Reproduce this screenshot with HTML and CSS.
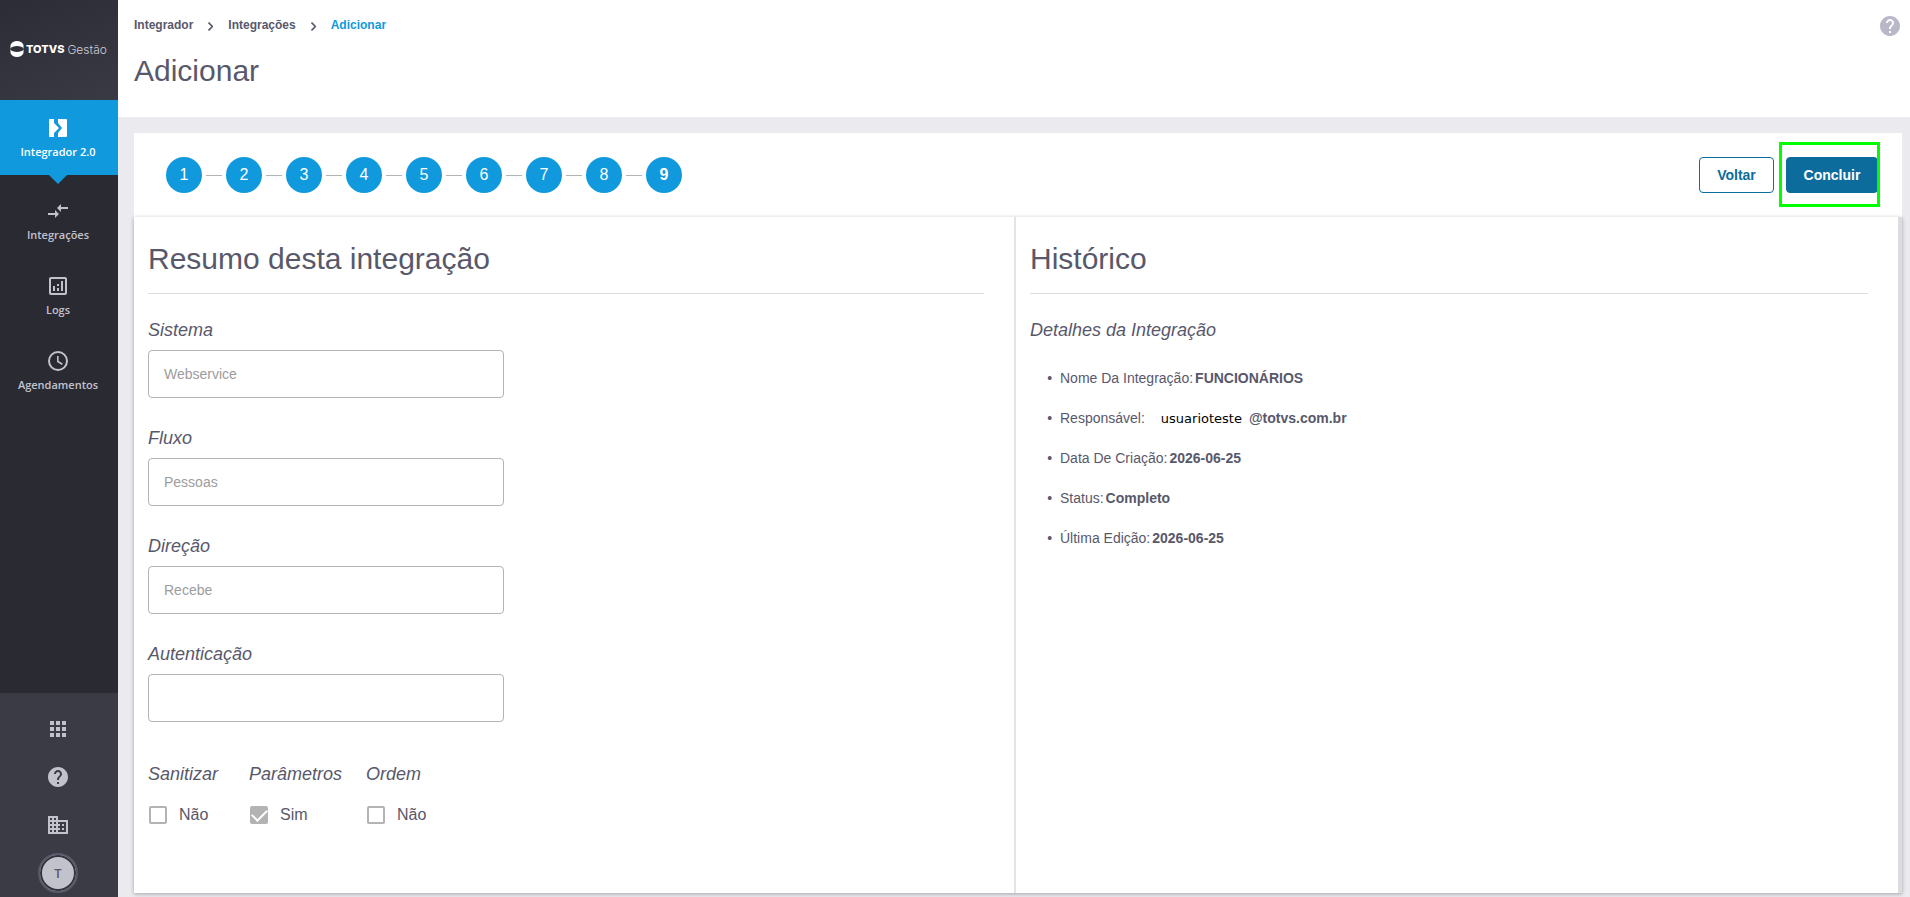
FILE: index.html
```html
<!DOCTYPE html>
<html lang="pt-BR">
<head>
    <meta charset="UTF-8">
    <meta name="viewport" content="width=device-width, initial-scale=1.0">
    <title>Integrador - Adicionar</title>
    <link rel="stylesheet" href="styles.css">
</head>
<body>

    <aside class="sidebar">
        <div class="logo">
            <svg width="14" height="16" viewBox="0 0 14 16">
                <path fill="#fff" fill-rule="evenodd" d="M7 0C10 0 12.500 1.500 13.500 4V12C12.500 14.500 10 16 7 16S1.500 14.500 0.500 12V4C1.500 1.500 4 0 7 0ZM0 8C1.500 10.200 4 11 7 11S12.500 10.200 14 8C12.500 5.800 10 5 7 5S1.500 5.800 0 8Z"/>
            </svg>
            <span class="logo-brand">TOTVS</span>
            <span class="logo-product">Gestão</span>
        </div>

        <nav class="menu">
            <a href="#" class="menu-item active">
                <svg width="20" height="20" viewBox="0 0 20 20" fill="#fff">
                    <path d="M2 1H6V5L11 10L6 15V19H2Q1 19 1 18V2Q1 1 2 1Z"/>
                    <path d="M10 1H18Q19 1 19 2V18Q19 19 18 19H10V15L14 10L10 5Z"/>
                </svg>
                <span>Integrador 2.0</span>
            </a>
            <a href="#" class="menu-item">
                <svg width="24" height="24" viewBox="0 0 24 24" fill="currentColor">
                    <path d="M9.010 14H2V16H9.010V19L13 15L9.010 11ZM14.990 13V10H22V8H14.990V5L11 9Z"/>
                </svg>
                <span>Integrações</span>
            </a>
            <a href="#" class="menu-item">
                <svg width="24" height="24" viewBox="0 0 24 24" fill="currentColor">
                    <path d="M19 3H5C3.900 3 3 3.900 3 5V19C3 20.100 3.900 21 5 21H19C20.100 21 21 20.100 21 19V5C21 3.900 20.100 3 19 3ZM19 19H5V5H19ZM7 12H9V17H7ZM15 7H17V17H15ZM11 14H13V17H11ZM11 10H13V12H11Z"/>
                </svg>
                <span>Logs</span>
            </a>
            <a href="#" class="menu-item">
                <svg width="24" height="24" viewBox="0 0 24 24" fill="none" stroke="currentColor" stroke-width="2">
                    <circle cx="12" cy="12" r="9"/>
                    <path stroke-width="1.600" d="M11.800 7V12.500L16.400 15.300"/>
                </svg>
                <span>Agendamentos</span>
            </a>
        </nav>

        <div class="tools">
            <button type="button" aria-label="Aplicativos">
                <svg width="24" height="24" viewBox="0 0 24 24" fill="currentColor">
                    <path d="M4 4H8V8H4ZM10 4H14V8H10ZM16 4H20V8H16ZM4 10H8V14H4ZM10 10H14V14H10ZM16 10H20V14H16ZM4 16H8V20H4ZM10 16H14V20H10ZM16 16H20V20H16Z"/>
                </svg>
            </button>
            <button type="button" aria-label="Ajuda">
                <svg width="24" height="24" viewBox="0 0 24 24" fill="currentColor">
                    <path d="M12 2C6.480 2 2 6.480 2 12s4.480 10 10 10 10-4.480 10-10S17.520 2 12 2zm1 17h-2v-2h2v2zm2.070-7.750-.9.920C13.450 12.900 13 13.500 13 15h-2v-.5c0-1.100.45-2.100 1.170-2.830l1.240-1.260c.37-.36.590-.86.590-1.410 0-1.100-.9-2-2-2s-2 .9-2 2H8c0-2.210 1.790-4 4-4s4 1.790 4 4c0 .88-.36 1.680-.93 2.250z"/>
                </svg>
            </button>
            <button type="button" aria-label="Empresas">
                <svg width="24" height="24" viewBox="0 0 24 24" fill="currentColor">
                    <path d="M12 7V3H2v18h20V7H12zM6 19H4v-2h2v2zm0-4H4v-2h2v2zm0-4H4V9h2v2zm0-4H4V5h2v2zm4 12H8v-2h2v2zm0-4H8v-2h2v2zm0-4H8V9h2v2zm0-4H8V5h2v2zm10 12h-8v-2h2v-2h-2v-2h2v-2h-2V9h8v10zm-2-8h-2v2h2v-2zm0 4h-2v2h2v-2z"/>
                </svg>
            </button>
            <button type="button" class="avatar">T</button>
        </div>
    </aside>

    <main class="content">
        <header class="page-header">
            <div>
                <nav class="breadcrumb">
                    <a href="#">Integrador</a>
                    <svg width="5" height="9" viewBox="0 0 5 9"><path d="M0.500 0.500L4.300 4.500L0.500 8.500"/></svg>
                    <a href="#">Integrações</a>
                    <svg width="5" height="9" viewBox="0 0 5 9"><path d="M0.500 0.500L4.300 4.500L0.500 8.500"/></svg>
                    <a href="#" class="current">Adicionar</a>
                </nav>
                <h1>Adicionar</h1>
            </div>
            <button type="button" class="help" aria-label="Ajuda">
                <svg width="24" height="24" viewBox="0 0 24 24" fill="currentColor">
                    <path d="M12 2C6.480 2 2 6.480 2 12s4.480 10 10 10 10-4.480 10-10S17.520 2 12 2zm1 17h-2v-2h2v2zm2.070-7.750-.9.920C13.450 12.900 13 13.500 13 15h-2v-.5c0-1.100.45-2.100 1.170-2.830l1.240-1.260c.37-.36.590-.86.590-1.410 0-1.100-.9-2-2-2s-2 .9-2 2H8c0-2.210 1.790-4 4-4s4 1.790 4 4c0 .88-.36 1.680-.93 2.250z"/>
                </svg>
            </button>
        </header>

        <div class="wizard">
            <div class="steps-bar">
                <ol class="steps">
                    <li>1</li>
                    <li>2</li>
                    <li>3</li>
                    <li>4</li>
                    <li>5</li>
                    <li>6</li>
                    <li>7</li>
                    <li>8</li>
                    <li class="current">9</li>
                </ol>
                <div class="actions">
                    <button type="button" class="btn">Voltar</button>
                    <div class="highlight">
                        <button type="button" class="btn btn-primary">Concluir</button>
                    </div>
                </div>
            </div>

            <div class="panel">
                <section class="summary">
                    <h2>Resumo desta integração</h2>

                    <div class="field">
                        <label for="sistema">Sistema</label>
                        <input type="text" id="sistema" value="Webservice" disabled>
                    </div>
                    <div class="field">
                        <label for="fluxo">Fluxo</label>
                        <input type="text" id="fluxo" value="Pessoas" disabled>
                    </div>
                    <div class="field">
                        <label for="direcao">Direção</label>
                        <input type="text" id="direcao" value="Recebe" disabled>
                    </div>
                    <div class="field">
                        <label for="autenticacao">Autenticação</label>
                        <input type="text" id="autenticacao" disabled>
                    </div>

                    <div class="options">
                        <div>
                            <h3>Sanitizar</h3>
                            <label class="check"><input type="checkbox" disabled>Não</label>
                        </div>
                        <div>
                            <h3>Parâmetros</h3>
                            <label class="check"><input type="checkbox" checked disabled>Sim</label>
                        </div>
                        <div>
                            <h3>Ordem</h3>
                            <label class="check"><input type="checkbox" disabled>Não</label>
                        </div>
                    </div>
                </section>

                <section class="history">
                    <h2>Histórico</h2>
                    <h3>Detalhes da Integração</h3>
                    <ul>
                        <li>Nome Da Integração:<b>FUNCIONÁRIOS</b></li>
                        <li>Responsável:<span class="user">usuarioteste</span><b>@totvs.com.br</b></li>
                        <li>Data De Criação:<b>2026-06-25</b></li>
                        <li>Status:<b>Completo</b></li>
                        <li>Última Edição:<b>2026-06-25</b></li>
                    </ul>
                </section>
            </div>
        </div>
    </main>

</body>
</html>
```

FILE: styles.css
```css
* {
    box-sizing: border-box;
}

body {
    margin: 0;
    min-height: 100vh;
    display: flex;
    font-family: "Liberation Sans", Arial, sans-serif;
    color: #58586b;
    background: #eaeaef;
}

h1, h2, h3 {
    margin: 0;
    font-weight: normal;
}

h1, h2 {
    font-size: 30px;
    line-height: 36px;
}

h3, .field label {
    font-size: 18px;
    line-height: 24px;
    font-style: italic;
}

a {
    color: inherit;
    text-decoration: none;
}

button {
    font-family: inherit;
    cursor: pointer;
}

/* Menu lateral */

.sidebar {
    width: 118px;
    flex-shrink: 0;
    display: flex;
    flex-direction: column;
    background: #2a2a33;
    color: #c2c2cc;
}

.logo {
    height: 100px;
    display: flex;
    align-items: center;
    padding: 0 8px 2px 10px;
    color: #fff;
    background: linear-gradient(160deg, #2c2c36, #3a3a45);
}

.logo svg {
    margin-right: 2px;
}

.logo-brand {
    font-family: Inter, sans-serif;
    font-size: 11px;
    font-weight: 800;
    margin-right: 3px;
}

.logo-product {
    font-family: Inter, sans-serif;
    font-size: 12px;
    font-weight: 300;
    color: #d0d0d6;
}

.menu {
    flex: 1;
}

.menu-item {
    height: 75px;
    display: flex;
    flex-direction: column;
    align-items: center;
    padding: 16px 2px 0 0;
    font-family: "Open Sans", sans-serif;
    font-size: 11px;
    font-weight: 600;
    line-height: 16px;
}

.menu-item svg {
    height: 24px;
    margin-bottom: 4px;
}

.menu-item.active {
    position: relative;
    margin-bottom: 8px;
    background: #1199de;
    color: #fff;
}

.menu-item.active::after {
    content: "";
    position: absolute;
    top: 100%;
    border: 9px solid transparent;
    border-top-color: #1199de;
    border-bottom: 0;
}

.tools {
    display: flex;
    flex-direction: column;
    align-items: center;
    gap: 24px;
    padding: 24px 2px 4px 0;
    background: #3b3b46;
}

.tools button {
    display: block;
    height: 24px;
    padding: 0;
    border: 0;
    background: none;
    color: #c2c2cc;
}

.tools .avatar {
    width: 40px;
    height: 40px;
    margin-top: -8px;
    border: 2px solid #585868;
    border-radius: 50%;
    background: #c2c2cc;
    box-shadow: inset 0 0 0 2px #33333d;
    color: #58586b;
    font-family: "Open Sans", sans-serif;
    font-size: 13px;
    font-weight: 600;
}

/* Cabeçalho */

.content {
    flex: 1;
    min-width: 0;
    display: flex;
    flex-direction: column;
}

.page-header {
    height: 117px;
    display: flex;
    justify-content: space-between;
    align-items: flex-start;
    padding: 14px 8px 0 16px;
    background: #fff;
}

.breadcrumb {
    display: flex;
    align-items: center;
    gap: 15px;
    margin-bottom: 17px;
    font-size: 12px;
    font-weight: bold;
    line-height: 22px;
}

.breadcrumb svg {
    margin-top: 2px;
    fill: none;
    stroke: #58586b;
    stroke-width: 1.6;
}

.breadcrumb .current {
    color: #1199de;
}

.help {
    display: block;
    height: 24px;
    padding: 0;
    border: 0;
    background: none;
    color: #b9b8c8;
}

/* Etapas */

.wizard {
    flex: 1;
    display: flex;
    flex-direction: column;
    padding: 16px 8px 4px 16px;
}

.steps-bar {
    height: 84px;
    display: flex;
    align-items: center;
    justify-content: space-between;
    padding: 0 24px 0 32px;
    background: #fff;
}

.steps {
    display: flex;
    gap: 24px;
    margin: 0;
    padding: 0;
    list-style: none;
}

.steps li {
    position: relative;
    width: 36px;
    height: 36px;
    border-radius: 50%;
    background: #1199de;
    color: #fff;
    font-size: 16px;
    line-height: 36px;
    text-align: center;
}

.steps li.current {
    font-weight: bold;
}

.steps li + li::before {
    content: "";
    position: absolute;
    right: 40px;
    top: 18px;
    width: 16px;
    border-top: 1px solid #b3b3b3;
}

.actions {
    display: flex;
    gap: 12px;
}

.btn {
    display: block;
    height: 36px;
    padding: 0 16px;
    border: 1px solid #0c6c9c;
    border-radius: 4px;
    background: #fff;
    color: #0c6c9c;
    font-size: 14px;
    font-weight: bold;
    min-width: 75px;
}

.btn-primary {
    min-width: 92px;
    background: #0c6c9c;
    color: #fff;
}

.highlight {
    position: relative;
}

.highlight::after {
    content: "";
    position: absolute;
    top: -15px;
    right: -2px;
    bottom: -14px;
    left: -7px;
    border: 3px solid #00ff00;
    pointer-events: none;
}

/* Painel */

.panel {
    flex: 1;
    display: grid;
    grid-template-columns: 1fr 1fr;
    border-right: 4px solid #dcdcde;
    background: #fff;
    box-shadow: 0 1px 4px rgba(0, 0, 0, 0.3);
}

.summary, .history {
    padding: 24px 30px 24px 14px;
}

.summary {
    border-right: 2px solid #e3e3ea;
}

.panel h2 {
    padding-bottom: 16px;
    margin-bottom: 24px;
    border-bottom: 1px solid #dcdcdc;
}

.field {
    margin-bottom: 28px;
}

.field label {
    display: block;
    margin-bottom: 8px;
}

.field input {
    display: block;
    width: 356px;
    height: 48px;
    padding: 0 15px;
    border: 1px solid #b3b3b3;
    border-radius: 4px;
    background: #fff;
    color: #9c9c9c;
    font-family: inherit;
    font-size: 14px;
}

.options {
    display: grid;
    grid-template-columns: 101px 117px 1fr;
    padding-top: 12px;
}

.check {
    display: flex;
    align-items: center;
    gap: 12px;
    margin: 17px 0 0 1px;
    font-size: 16px;
    line-height: 24px;
}

.check input {
    appearance: none;
    display: grid;
    place-items: center;
    width: 18px;
    height: 18px;
    margin: 0;
    border: 2px solid #b3b3b3;
    border-radius: 2px;
    background: #fff;
}

.check input:checked {
    background: #b3b3b3;
}

.check input:checked::before {
    content: "";
    width: 13px;
    height: 7px;
    margin-top: -4px;
    border: solid #fff;
    border-width: 0 0 2px 2px;
    transform: rotate(-45deg);
}

.history ul {
    margin: 16px 0 0;
    padding-left: 30px;
    font-size: 14px;
    line-height: 40px;
    list-style-type: "•  ";
}

.history b {
    margin-left: 2px;
}

.history .user {
    margin: 0 5px 0 16px;
    color: #000;
    font-family: "DejaVu Sans", sans-serif;
    font-size: 13px;
    line-height: 16px;
}
```
